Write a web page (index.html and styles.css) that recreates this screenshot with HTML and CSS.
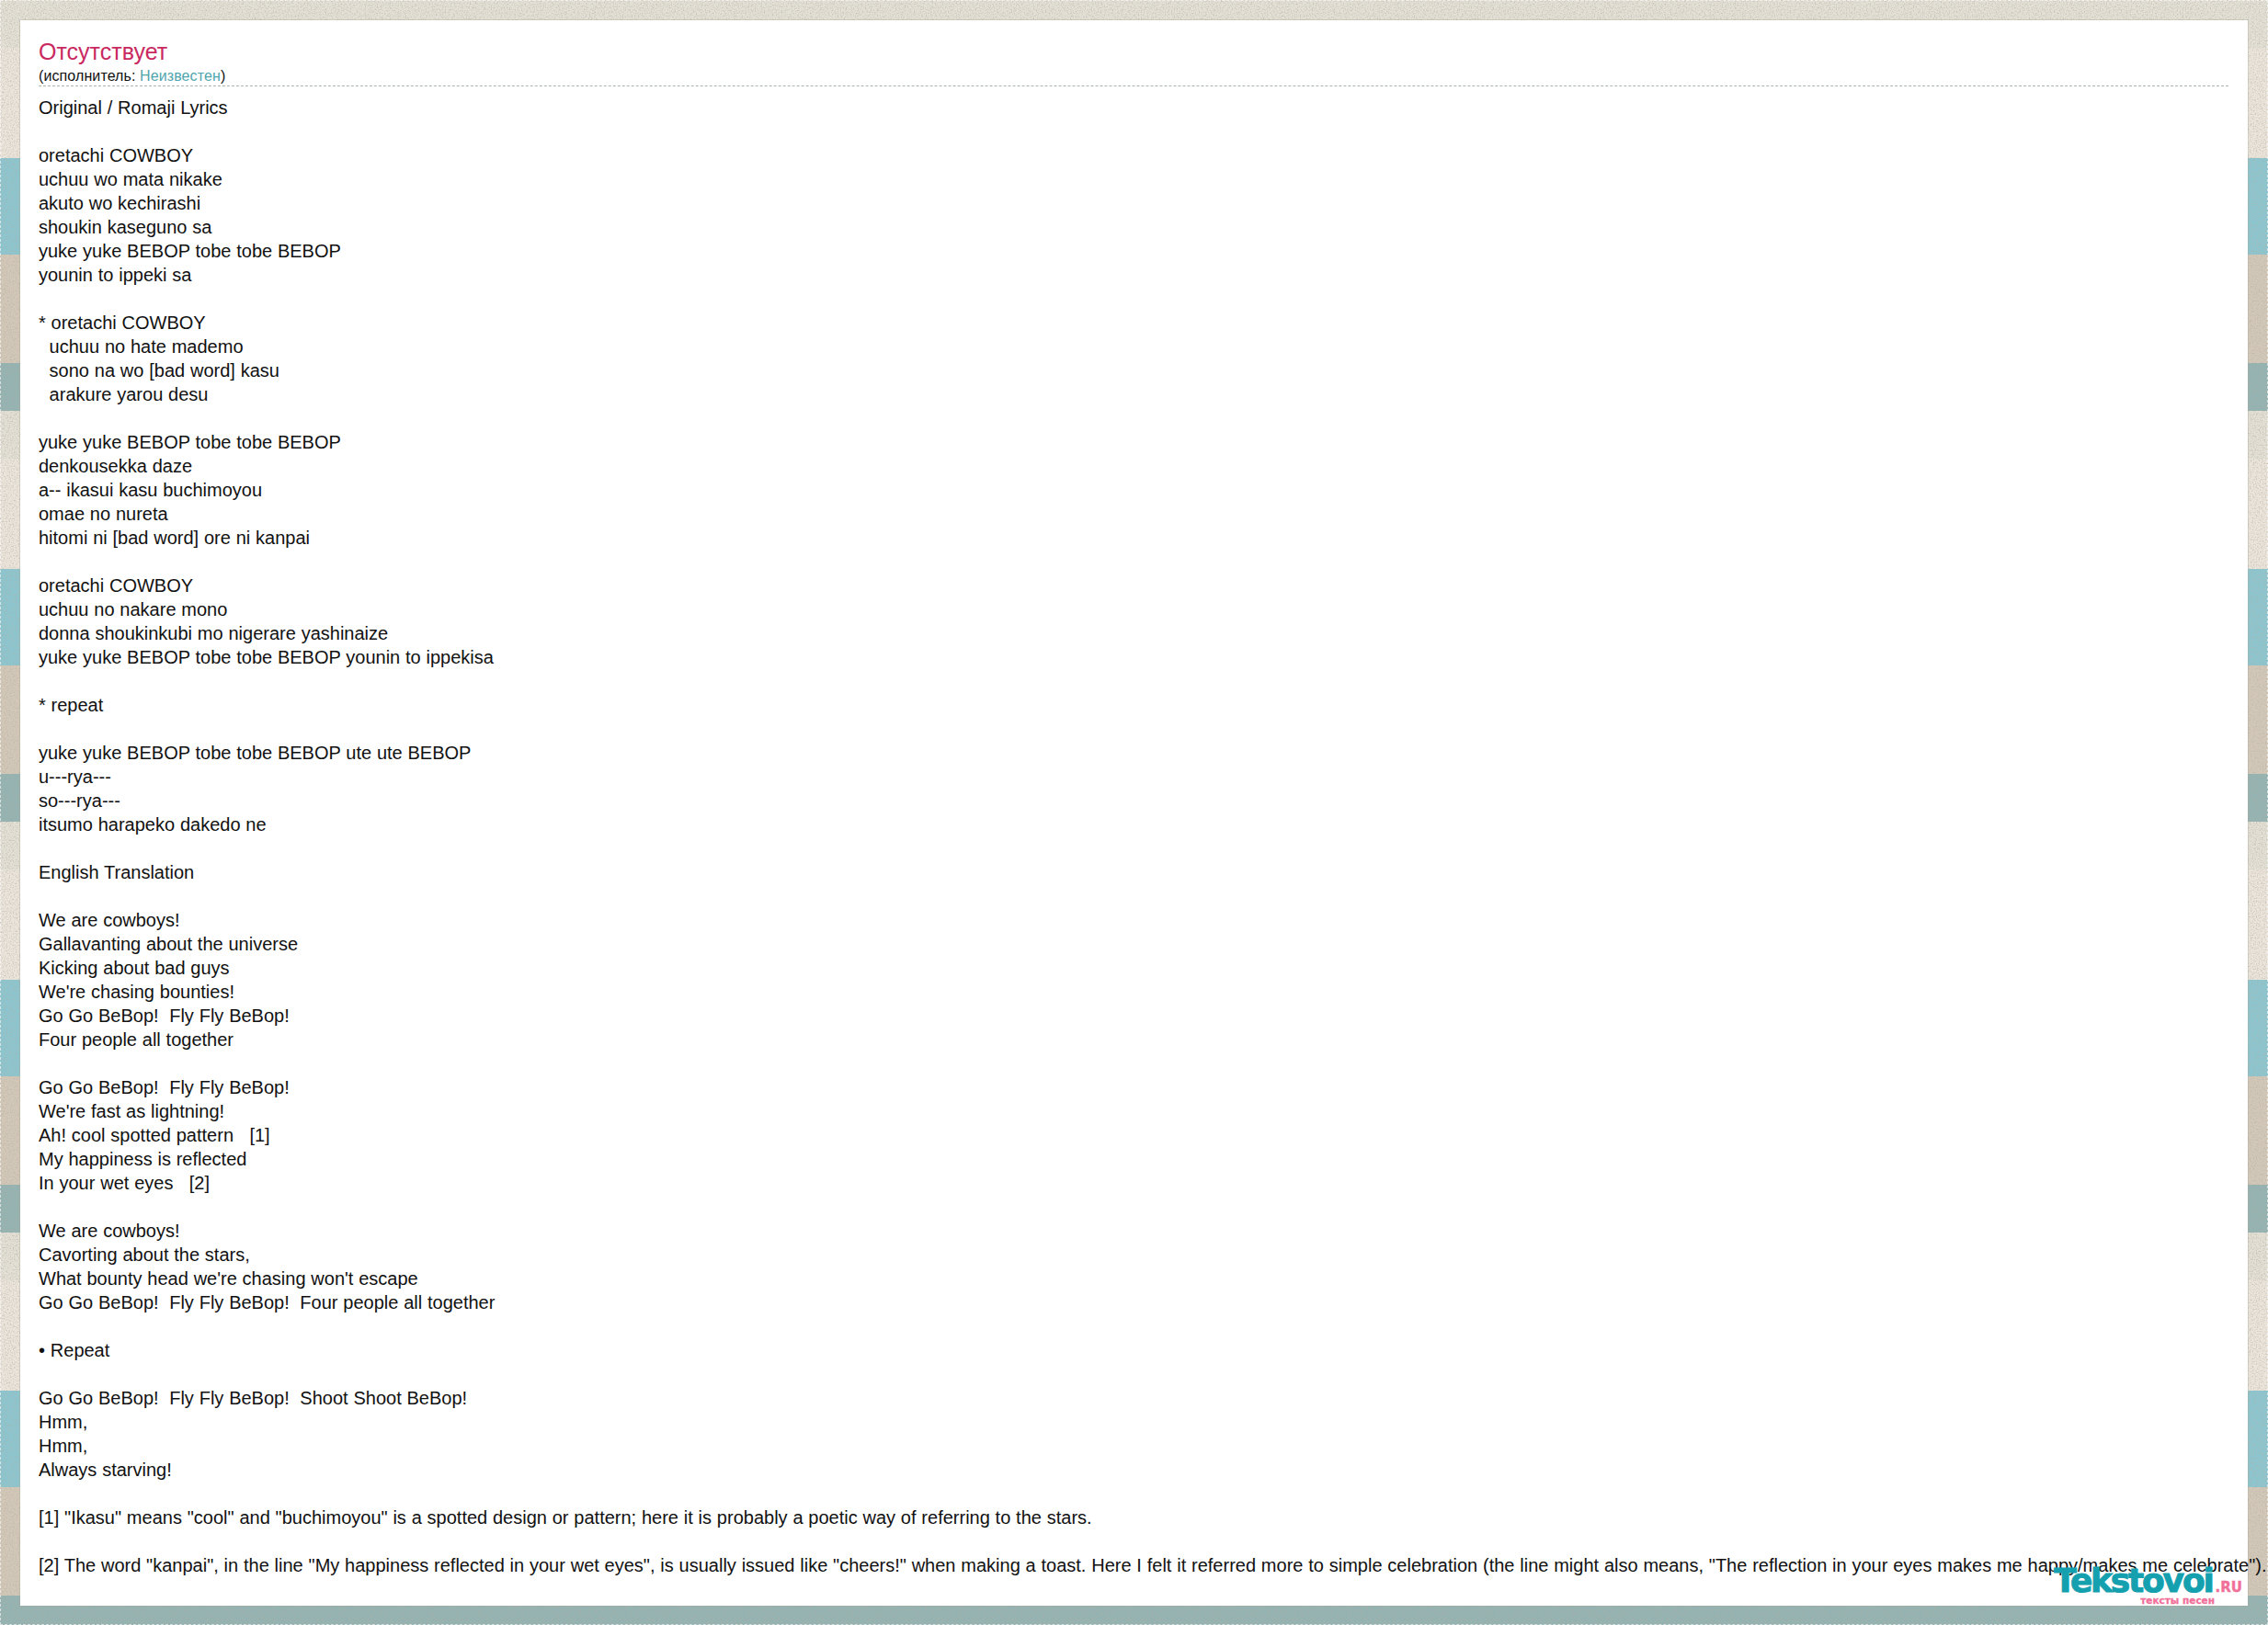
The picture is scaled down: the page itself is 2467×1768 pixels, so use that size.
FILE: index.html
```html
<!DOCTYPE html>
<html lang="ru">
<head>
<meta charset="utf-8">
<title>Отсутствует</title>
<link rel="stylesheet" href="styles.css">
</head>
<body>
<svg class="texture" width="2467" height="1768" aria-hidden="true">
<filter id="speckle" x="0" y="0" width="100%" height="100%">
<feTurbulence type="fractalNoise" baseFrequency="0.7" numOctaves="2" seed="4"/>
<feColorMatrix type="matrix" values="0 0 0 0 0.45  0 0 0 0 0.42  0 0 0 0 0.36  1.6 0 0 0 -0.72"/>
</filter>
<rect width="2467" height="1768" filter="url(#speckle)"/>
</svg>
<div class="stitch"></div>
<main class="card">
<header class="head">
<h1 class="title">Отсутствует</h1>
<p class="artist">(исполнитель: <a class="artist-link" href="#">Неизвестен</a>)</p>
</header>
<pre class="lyrics">Original / Romaji Lyrics

oretachi COWBOY
uchuu wo mata nikake
akuto wo kechirashi
shoukin kaseguno sa
yuke yuke BEBOP tobe tobe BEBOP
younin to ippeki sa

* oretachi COWBOY
  uchuu no hate mademo
  sono na wo [bad word] kasu
  arakure yarou desu

yuke yuke BEBOP tobe tobe BEBOP
denkousekka daze
a-- ikasui kasu buchimoyou
omae no nureta
hitomi ni [bad word] ore ni kanpai

oretachi COWBOY
uchuu no nakare mono
donna shoukinkubi mo nigerare yashinaize
yuke yuke BEBOP tobe tobe BEBOP younin to ippekisa

* repeat

yuke yuke BEBOP tobe tobe BEBOP ute ute BEBOP
u---rya---
so---rya---
itsumo harapeko dakedo ne

English Translation

We are cowboys!
Gallavanting about the universe
Kicking about bad guys
We're chasing bounties!
Go Go BeBop!  Fly Fly BeBop!
Four people all together

Go Go BeBop!  Fly Fly BeBop!
We're fast as lightning!
Ah! cool spotted pattern   [1]
My happiness is reflected
In your wet eyes   [2]

We are cowboys!
Cavorting about the stars,
What bounty head we're chasing won't escape
Go Go BeBop!  Fly Fly BeBop!  Four people all together

• Repeat

Go Go BeBop!  Fly Fly BeBop!  Shoot Shoot BeBop!
Hmm,
Hmm,
Always starving!

[1] "Ikasu" means "cool" and "buchimoyou" is a spotted design or pattern; here it is probably a poetic way of referring to the stars.

[2] The word "kanpai", in the line "My happiness reflected in your wet eyes", is usually issued like "cheers!" when making a toast. Here I felt it referred more to simple celebration (the line might also means, "The reflection in your eyes makes me happy/makes me celebrate").</pre>
<div class="logo">
<div class="logo-main">Tekstovoi<span class="logo-ru">.RU</span></div>
<div class="logo-sub">тексты песен</div>
</div>
</main>
</body>
</html>
```
FILE: styles.css
```css
html, body { margin: 0; padding: 0; }
body {
  position: relative;
  height: 1768px;
  box-sizing: border-box;
  padding: 22px 22px 21px;
  overflow: hidden;
  background-color: #e8e3d8;
  background-image: repeating-linear-gradient(to bottom,
    #e3e0d5 0, #e3e0d5 52px,
    #ebe5dc 52px, #ebe5dc 172px,
    #8bc6d0 172px, #8bc6d0 277px,
    #d3c8b8 277px, #d3c8b8 395px,
    #93b3b2 395px, #93b3b2 447px);
  font-family: "Liberation Sans", Arial, sans-serif;
}
.texture { position: absolute; left: 0; top: 0; }
.stitch {
  position: absolute;
  inset: 0;
  border: 1px dashed rgba(255, 255, 255, 0.6);
}
.card {
  position: relative;
  height: 1725px;
  box-sizing: border-box;
  background: #fff;
  padding: 20px 21px 0 20px;
  box-shadow: 0 0 0 1px rgba(170, 165, 150, 0.35);
}
.head { border-bottom: 1px dashed #a9b4b4; padding-bottom: 1px; }
.title { margin: 0 0 4px; font-size: 25px; line-height: 28px; font-weight: 400; color: #c9295f; }
.artist { margin: 0; font-size: 16px; line-height: 18px; color: #111; letter-spacing: 0.1px; }
.artist-link { color: #4fa5ad; text-decoration: none; }
.lyrics {
  margin: 10px 0 0;
  font-family: "Liberation Sans", Arial, sans-serif;
  font-size: 20px;
  line-height: 26px;
  word-spacing: 0.25px;
  color: #111;
  white-space: pre;
}
.logo {
  position: absolute;
  right: 6px;
  bottom: 1px;
  display: flex;
  flex-direction: column;
  align-items: flex-end;
}
.logo-main {
  font: 700 36px/14px "DejaVu Sans", sans-serif;
  letter-spacing: -2.2px;
  color: #14a0ae;
  -webkit-text-stroke: 1px #14a0ae;
}
.logo-ru {
  margin-left: 3px;
  font-size: 15px;
  letter-spacing: 0;
  color: #f0709a;
  -webkit-text-stroke: 0.4px #f0709a;
}
.logo-sub {
  margin: 2px 30px 0 0;
  font: 700 10.5px/10px "DejaVu Sans", sans-serif;
  color: #f0709a;
  -webkit-text-stroke: 0.3px #f0709a;
}
```
